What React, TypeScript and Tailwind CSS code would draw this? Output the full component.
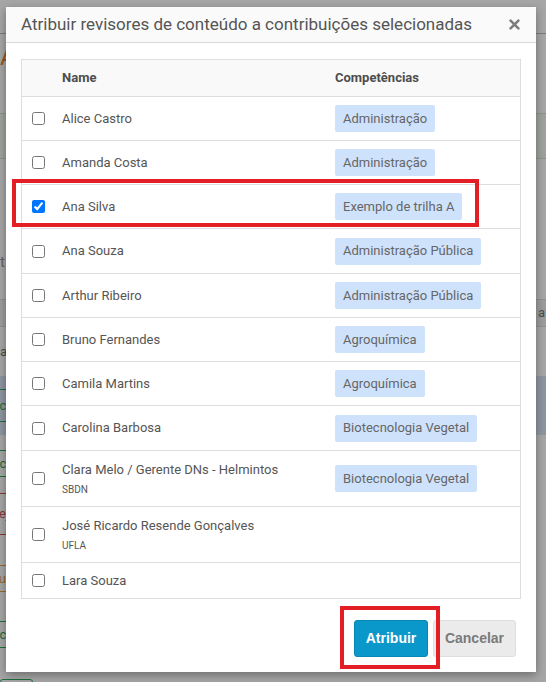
import React from "react";

type Reviewer = { name: string; org?: string; tag?: string; checked?: boolean; h: string };

const reviewers: Reviewer[] = [
  { name: "Alice Castro", tag: "Administração", h: "h-[44px]" },
  { name: "Amanda Costa", tag: "Administração", h: "h-[44px]" },
  { name: "Ana Silva", tag: "Exemplo de trilha A", checked: true, h: "h-[44px]" },
  { name: "Ana Souza", tag: "Administração Pública", h: "h-[45px]" },
  { name: "Arthur Ribeiro", tag: "Administração Pública", h: "h-[44px]" },
  { name: "Bruno Fernandes", tag: "Agroquímica", h: "h-[44px]" },
  { name: "Camila Martins", tag: "Agroquímica", h: "h-[44px]" },
  { name: "Carolina Barbosa", tag: "Biotecnologia Vegetal", h: "h-[45px]" },
  { name: "Clara Melo / Gerente DNs - Helmintos", org: "SBDN", tag: "Biotecnologia Vegetal", h: "h-[56px]" },
  { name: "José Ricardo Resende Gonçalves", org: "UFLA", h: "h-[56px]" },
  { name: "Lara Souza", h: "h-[36px]" },
];

function CloseIcon() {
  return (
    <svg width="11" height="11" viewBox="0 0 11 11" aria-hidden="true">
      <path d="M1.6 1.6 L9.4 9.4 M9.4 1.6 L1.6 9.4" stroke="#7c7c7c" strokeWidth="2.6" strokeLinecap="round" />
    </svg>
  );
}

function PageBehind() {
  return (
    <div className="flex flex-col w-full" style={{ fontFamily: "Roboto, 'Liberation Sans', sans-serif" }}>
      <div className="h-[34px] border-b border-[#bdbdbd] bg-white" />
      <div className="h-[46px] flex items-center text-[24px] text-[#e8862a]">Avaliações</div>
      <div className="mt-[33px] h-[46px] border-y border-[#d6e9c6] bg-[#f3faf0]" />
      <div className="h-[140px] flex items-end pb-[26px] text-[15px] text-[#999]">t</div>
      <div className="h-[28px] bg-[#f2f2f2] border-y border-[#ddd] flex items-center justify-end pr-[1px] text-[13px] text-[#777]">a</div>
      <div className="h-[49px] flex items-center text-[13px] text-[#777]">a</div>
      <div className="h-[59px] bg-[#dce6f7] flex items-center">
        <span className="ml-[-14px] border border-[#2eaa5c] rounded-[3px] px-[4px] text-[13px] text-[#2eaa5c] leading-[31px]">Aceito</span>
      </div>
      <div className="h-[15px]" />
      <div className="h-[27px] flex items-center">
        <span className="ml-[-14px] border border-[#2eaa5c] rounded-[3px] px-[4px] text-[13px] text-[#2eaa5c] leading-[25px]">Aceito</span>
      </div>
      <div className="h-[16px]" />
      <div className="h-[42px] flex items-center">
        <span className="ml-[-14px] border border-[#d9534f] rounded-[3px] px-[4px] text-[13px] text-[#d9534f] leading-[40px]">Rejeitado</span>
      </div>
      <div className="h-[30px]" />
      <div className="h-[27px] flex items-center">
        <span className="ml-[-22px] border border-[#e8a33d] rounded-[3px] px-[4px] text-[13px] text-[#e8a33d] leading-[25px]">Aguar</span>
      </div>
      <div className="h-[29px]" />
      <div className="h-[27px] flex items-center">
        <span className="ml-[-14px] border border-[#2eaa5c] rounded-[3px] px-[4px] text-[13px] text-[#2eaa5c] leading-[25px]">Aceito</span>
      </div>
      <div className="h-[31px]" />
      <div className="w-[33px] h-[20px] border border-[#2eaa5c] rounded-[3px]" />
    </div>
  );
}

export default function App() {
  return (
    <div className="relative w-[546px] h-[682px] overflow-hidden bg-white">
      <PageBehind />
      <div className="absolute inset-0 bg-black/35" />

      <div
        className="absolute left-[6px] top-[7px] w-[530px] bg-white flex flex-col shadow-[0_3px_9px_rgba(0,0,0,0.35)]"
        style={{ fontFamily: "Roboto, 'Liberation Sans', sans-serif" }}
      >
        <div className="h-[36px] bg-[#fafafa] border-b border-[#d9d9d9] flex items-center justify-between pl-[15px] pr-[16px]">
          <span className="text-[17px] text-[#555] leading-none">Atribuir revisores de conteúdo a contribuições selecionadas</span>
          <CloseIcon />
        </div>

        <div className="px-[15px] pt-[16px]">
          <div className="border border-[#dddddd] text-[13px] text-[#555]">
            <div className="h-[36px] bg-[#f9f9f9] grid grid-cols-[28px_273px_1fr] items-center font-bold text-[#4d4d4d]">
              <div />
              <div className="pl-[12px]">Name</div>
              <div className="pl-[12px]">Competências</div>
            </div>
            {reviewers.map((r) => (
              <div key={r.name} className={`${r.h} border-t border-[#dddddd] grid grid-cols-[28px_273px_1fr] items-center`}>
                <div className="pl-[10px] flex items-center">
                  <input type="checkbox" defaultChecked={r.checked} className="m-0 w-[13px] h-[13px]" />
                </div>
                <div className="pl-[12px] flex flex-col">
                  <span className="leading-[18px]">{r.name}</span>
                  {r.org && <span className="mt-[4px] text-[10px] leading-[14px] text-[#555]">{r.org}</span>}
                </div>
                <div className="pl-[12px] flex">
                  {r.tag && (
                    <span className="h-[27px] px-[8px] flex items-center rounded-[2px] bg-[#cfe2fc] text-[#666]">{r.tag}</span>
                  )}
                </div>
              </div>
            ))}
          </div>
        </div>

        <div
          className="pt-[21px] pb-[15px] pr-[20px] flex justify-end gap-[5px]"
          style={{ fontFamily: "'Liberation Sans', Arial, sans-serif" }}
        >
          <button className="w-[74px] h-[37px] rounded-[3px] bg-[#0a97c9] border border-[#0887b5] text-white font-bold text-[14px]">
            Atribuir
          </button>
          <button className="w-[83px] h-[37px] rounded-[3px] bg-[#ebebeb] border border-[#dedede] text-[#7a7a7a] font-bold text-[14px]">
            Cancelar
          </button>
        </div>
      </div>

      {/* highlight frames */}
      <div className="absolute left-[12px] top-[179px] w-[467px] h-[48px] border-[4px] border-[#e41e25]" />
      <div className="absolute left-[340px] top-[606px] w-[100px] h-[63px] border-[4px] border-[#e41e25]" />
    </div>
  );
}
